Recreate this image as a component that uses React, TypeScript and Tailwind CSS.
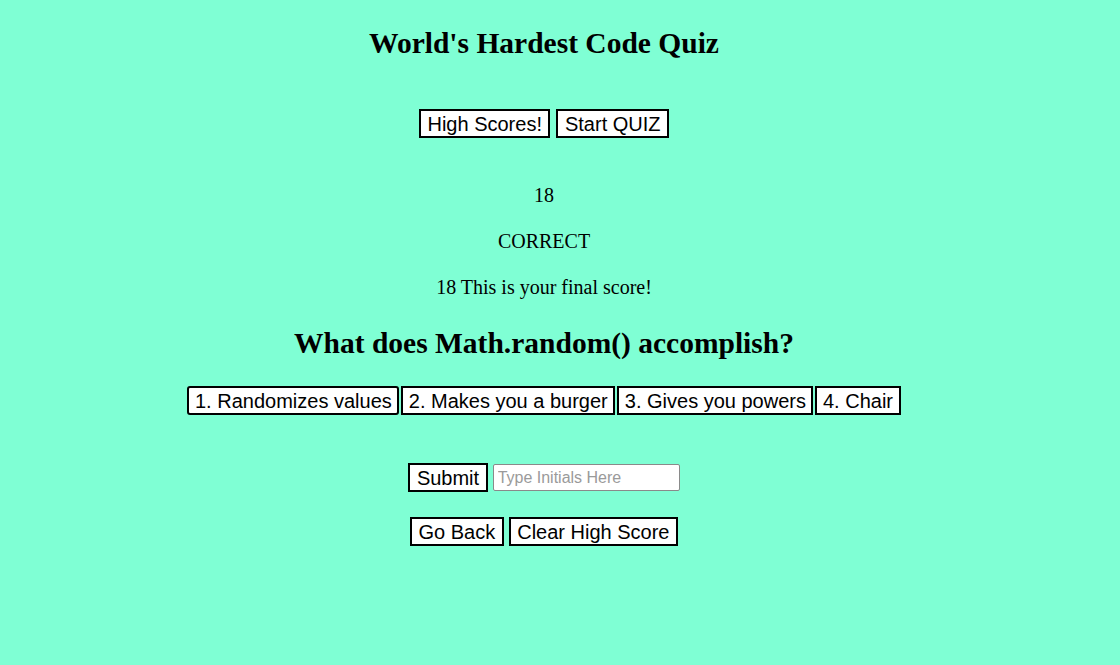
import React from "react";

const btn =
  "bg-white border-2 border-black text-black px-[6.5px] h-[29px] leading-none text-[20px] [font-family:'Liberation_Sans',Arial,sans-serif]";
const ans =
  "bg-white border-2 border-black text-black px-[5.5px] h-[29px] leading-none text-[20px] [font-family:'Liberation_Sans',Arial,sans-serif]";

export default function App() {
  return (
    <div className="min-h-[665px] w-full bg-[#7fffd4] [font-family:'Liberation_Serif','Times_New_Roman',serif] text-black">
      <div className="w-[1088px] flex flex-col items-center">
        <h1 className="mt-[27px] text-[29.5px] font-bold leading-[32px]">World's Hardest Code Quiz</h1>
        <div className="mt-[50px] flex gap-[6px]">
          <button className={btn}>High Scores!</button>
          <button className={btn}>Start QUIZ</button>
        </div>
        <p className="mt-[46px] text-[20px] leading-[22px]">18</p>
        <p className="mt-[24px] text-[20px] leading-[22px]">CORRECT</p>
        <p className="mt-[24px] text-[20px] leading-[22px]">18 This is your final score!</p>
        <h2 className="mt-[29px] text-[29.5px] font-bold leading-[32px]">What does Math.random() accomplish?</h2>
        <div className="mt-[27px] flex gap-[2px]">
          <button className={ans + " rounded-[3px]"}>1. Randomizes values</button>
          <button className={ans}>2. Makes you a burger</button>
          <button className={ans}>3. Gives you powers</button>
          <button className={ans}>4. Chair</button>
        </div>
        <div className="mt-[48px] flex items-center gap-[5px]">
          <button className={btn}>Submit</button>
          <input
            placeholder="Type Initials Here"
            className="w-[187px] h-[27px] bg-white border border-[#8a8a8a] rounded-[2px] px-[4px] text-[16px] [font-family:'Liberation_Sans',Arial,sans-serif] placeholder:text-[#9a9a9a]"
          />
        </div>
        <div className="mt-[25px] flex gap-[5px]">
          <button className={btn}>Go Back</button>
          <button className={btn}>Clear High Score</button>
        </div>
      </div>
    </div>
  );
}
